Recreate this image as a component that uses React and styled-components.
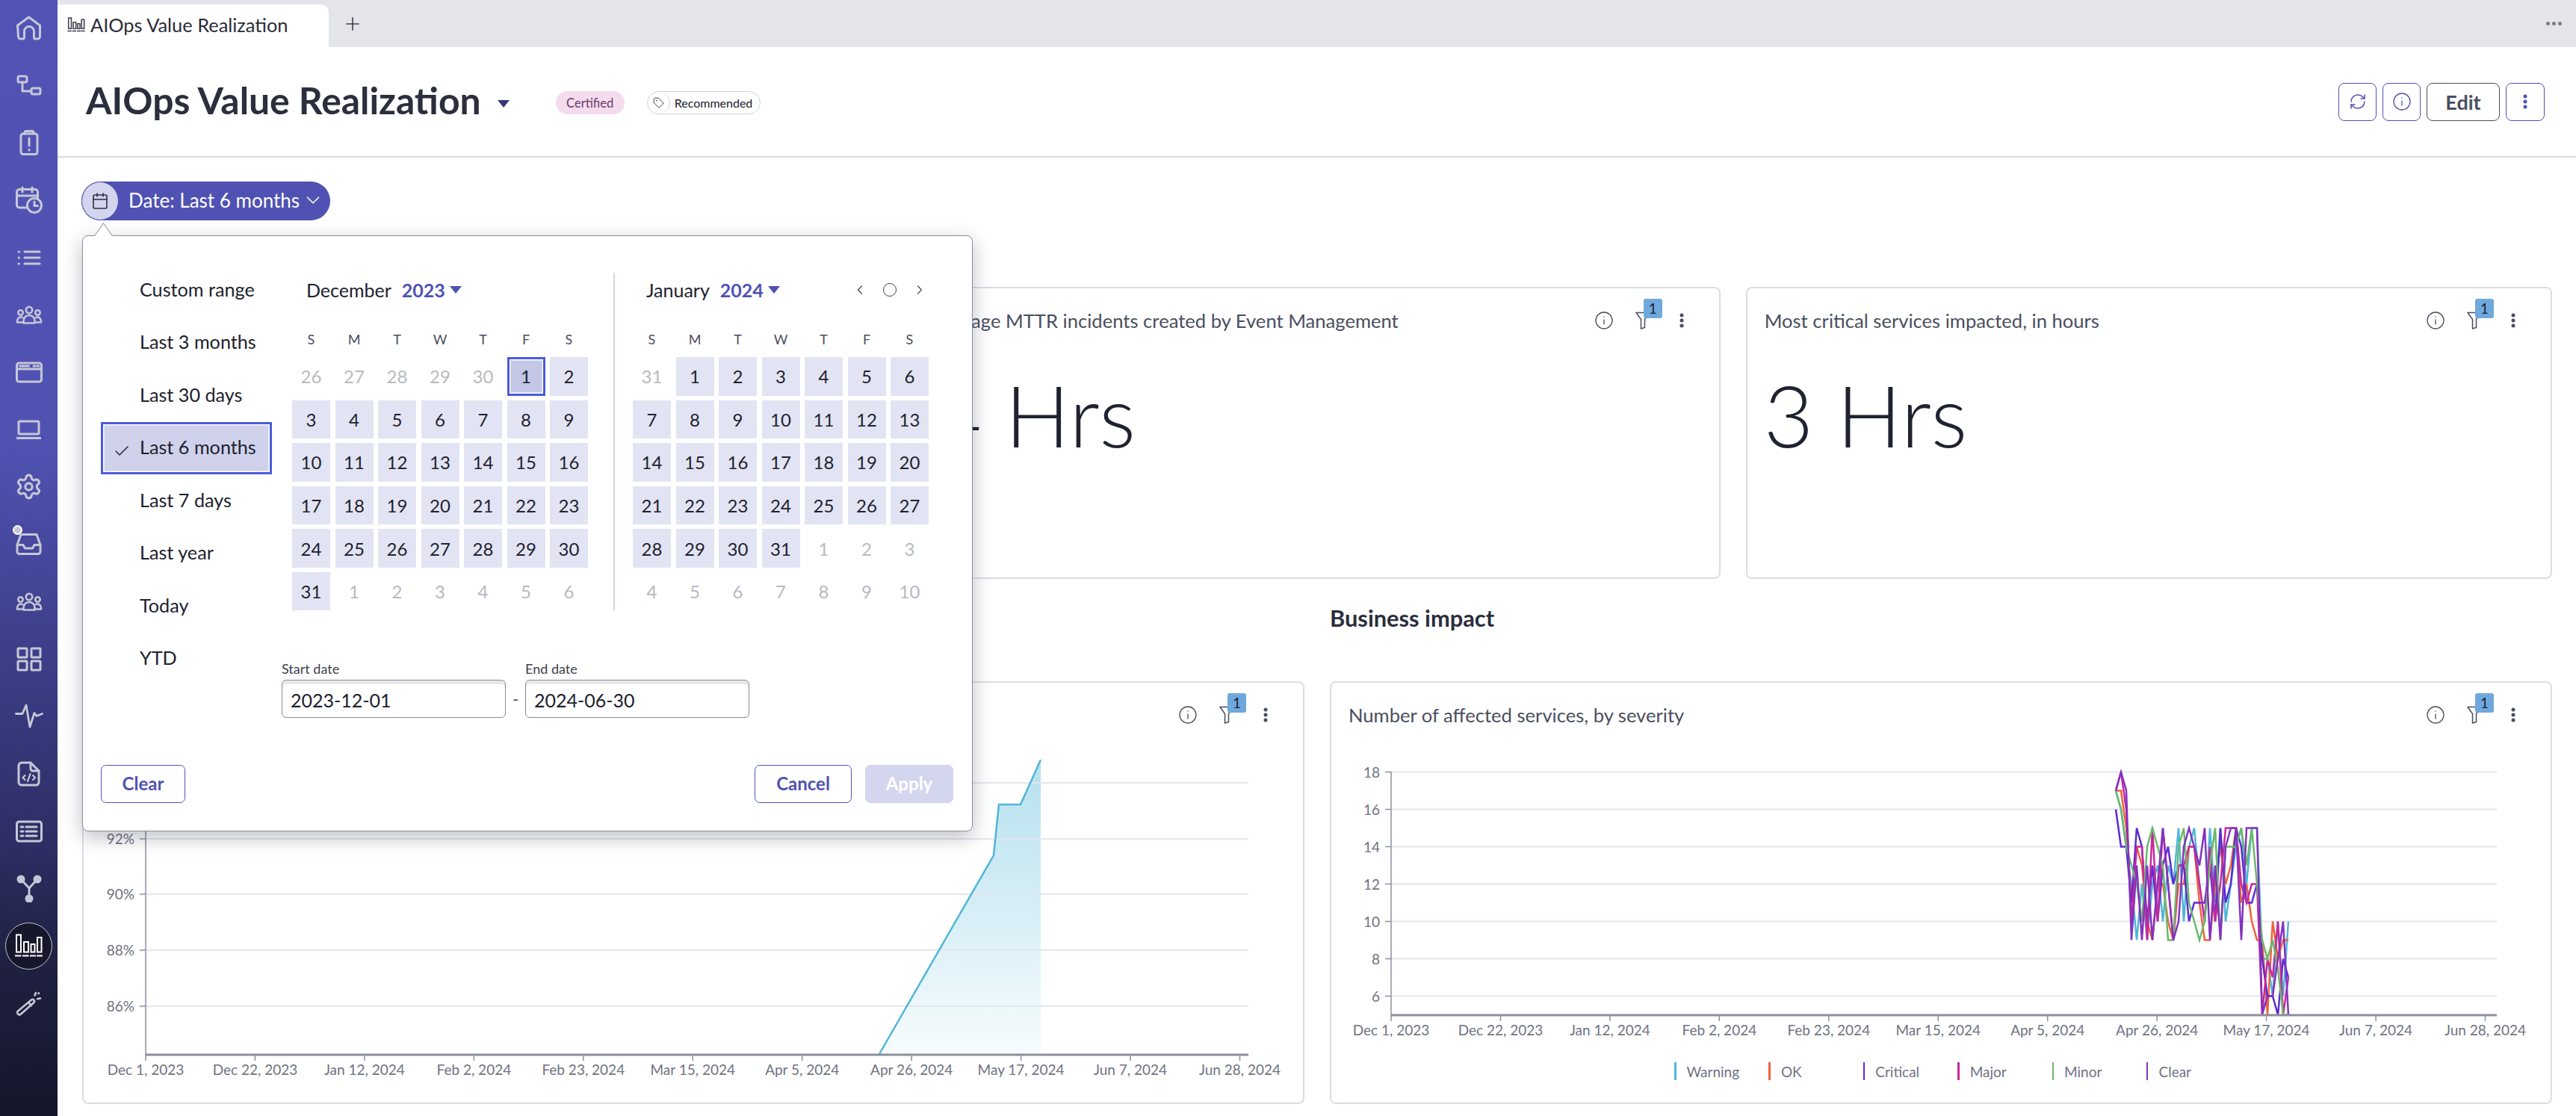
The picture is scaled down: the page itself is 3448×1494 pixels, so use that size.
import React from "react";
import styled, { createGlobalStyle } from "styled-components";
import { Settings, RefreshCw, Check, ChevronLeft, ChevronRight, ChevronDown, Tag, Plus, Calendar } from "lucide-react";

const indigo = "#5052b3";
const ink = "#20222e";
const slate = "#4a4e60";
const iconGrey = "#c6c7d6";

const GlobalStyle = createGlobalStyle`
  html, body {
    margin: 0;
    padding: 0;
    background: #fff;
    font-family: Lato, "Open Sans", sans-serif;
    color: ${ink};
  }
  * { box-sizing: border-box; }
`;

const presets = ["Custom range", "Last 3 months", "Last 30 days", "Last 6 months", "Last 7 days", "Last year", "Today", "YTD"];

const range = (from, to) => {
  const out = [];
  for (let i = from; i <= to; i++) out.push(i);
  return out;
};

const decemberCells = [
  ...range(26, 30).map((d) => ({ d, muted: true })),
  ...range(1, 31).map((d) => ({ d, selected: d === 1 })),
  ...range(1, 6).map((d) => ({ d, muted: true })),
];
const januaryCells = [
  { d: 31, muted: true },
  ...range(1, 31).map((d) => ({ d })),
  ...range(1, 10).map((d) => ({ d, muted: true })),
];

const weekdays = ["S", "M", "T", "W", "T", "F", "S"];

const dateTicks = ["Dec 1, 2023", "Dec 22, 2023", "Jan 12, 2024", "Feb 2, 2024", "Feb 23, 2024", "Mar 15, 2024", "Apr 5, 2024", "Apr 26, 2024", "May 17, 2024", "Jun 7, 2024", "Jun 28, 2024"];

const severity = [
  { name: "Warning", color: "#4fb6d8", values: [17, 16, 14, 12, 9, 12, 9, 12, 13, 10, 13, 12, 15, 10, 14, 15, 12, 10, 15, 11, 15, 10, 12, 14, 15, 12, 15, 15, 8, 8, 6, 10, 6, 10] },
  { name: "OK", color: "#f0623a", values: [17, 17, 15, 11, 14, 13, 10, 9, 12, 12, 10, 9, 12, 12, 14, 14, 11, 9, 9, 12, 14, 12, 13, 15, 11, 12, 10, 9, 9, 5, 10, 8, 9, 9] },
  { name: "Critical", color: "#5a2bd6", values: [16, 14, 14, 11, 15, 14, 10, 13, 10, 13, 14, 12, 13, 13, 10, 11, 11, 11, 13, 10, 15, 11, 12, 15, 14, 11, 11, 12, 8, 6, 6, 5, 8, 7] },
  { name: "Major", color: "#c8299c", values: [17, 18, 16, 10, 14, 14, 9, 15, 10, 15, 12, 9, 13, 13, 14, 14, 12, 10, 14, 10, 12, 15, 15, 15, 12, 11, 12, 12, 5, 8, 7, 10, 5, 7] },
  { name: "Minor", color: "#6cb96c", values: [17, 16, 14, 13, 12, 10, 14, 15, 14, 13, 9, 9, 14, 15, 11, 10, 9, 10, 13, 15, 9, 14, 14, 14, 15, 13, 15, 12, 9, 8, 9, 7.5, 5, 5] },
  { name: "Clear", color: "#8333c0", values: [17, 18, 17, 9, 13, 9, 13, 9, 12, 15, 12, 9, 10, 14, 15, 14, 13, 15, 9, 13, 9, 14, 15, 15, 9, 15, 15, 15, 5, 6, 6, 8, 10, 5] },
];

// sidebar icons, each drawn in its own box so the size follows the reference
const Glyph = ({ w, h, children, color = iconGrey, sw = 3 }) => (
  <svg width={w} height={h} viewBox={`0 0 ${w} ${h}`} fill="none" stroke={color} strokeWidth={sw} strokeLinecap="round" strokeLinejoin="round">
    {children}
  </svg>
);

const BarsIcon = ({ w, h, color, sw }) => (
  <svg width={w} height={h} viewBox="0 0 37 32" fill="none" stroke={color} strokeWidth={sw}>
    <rect x="2" y="1.5" width="6" height="23" />
    <rect x="12" y="11" width="6" height="13.5" />
    <rect x="21.5" y="14" width="5" height="10.5" />
    <rect x="30" y="5" width="5.5" height="19.5" />
    <path d="M0 29.5h8.5M10 29.5h8.5M20 29.5h8M29 29.5h8" />
  </svg>
);

const PeopleIcon = () => (
  <Glyph w={36} h={25} sw={2.6}>
    <circle cx="18" cy="6" r="4.2" />
    <path d="M10.5 23.5v-3a7.5 7.5 0 0 1 15 0v3z" />
    <circle cx="6.5" cy="9.5" r="3.2" />
    <path d="M9 22.5H2v-2a5 5 0 0 1 7-4.5" />
    <circle cx="29.5" cy="9.5" r="3.2" />
    <path d="M27 22.5h7v-2a5 5 0 0 0-7-4.5" />
  </Glyph>
);

function InboxIcon() {
  return (
    <Glyph w={35} h={31}>
      <path d="M7 2.5h21l5 14v9a3 3 0 0 1-3 3H5a3 3 0 0 1-3-3v-9z" />
      <path d="M2 16.500h8l2.500 4.500h10l2.500-4.500h8" />
    </Glyph>
  );
}

const sideIcons = [
  <Glyph key="home" w={35} h={33}>
    <path d="M2.5 13 17.5 2l15 11v15a3 3 0 0 1-3 3h-3a2 2 0 0 1-2-2v-8a6.5 6.5 0 0 0-13 0v8a2 2 0 0 1-2 2h-3a3 3 0 0 1-3-3z" />
  </Glyph>,
  <Glyph key="flow" w={34} h={28}>
    <rect x="2" y="2" width="12" height="8" rx="2" />
    <rect x="20" y="18" width="12" height="8" rx="2" />
    <path d="M8 10v12h12" />
  </Glyph>,
  <Glyph key="clip" w={26} h={34}>
    <rect x="2" y="5" width="22" height="27.5" rx="3" />
    <path d="M7 5V3.500A2 2 0 0 1 9 1.500h8a2 2 0 0 1 2 2V5" />
    <path d="M13 11v10M13 26.500v.5" />
  </Glyph>,
  <Glyph key="cal" w={38} h={37}>
    <path d="M15 29H6a3.500 3.500 0 0 1-3.500-3.500V8A3.500 3.500 0 0 1 6 4.500h21A3.500 3.500 0 0 1 30.500 8v8" />
    <path d="M10 2v6M23 2v6M3 13h27" />
    <circle cx="26" cy="26" r="9.500" />
    <path d="M26 21v5.500h4.500" />
  </Glyph>,
  <Glyph key="list" w={32} h={22}>
    <path d="M10 3h20M10 11h20M10 19h20M2 3h.5M2 11h.5M2 19h.5" />
  </Glyph>,
  <PeopleIcon key="team" />,
  <Glyph key="window" w={36} h={29}>
    <rect x="1.500" y="2" width="33" height="25" rx="3" />
    <path d="M1.500 10h33M5.500 6h12M24 6h2M29 6h2" />
  </Glyph>,
  <Glyph key="laptop" w={33} h={26}>
    <rect x="3" y="2" width="27" height="17" rx="1.500" />
    <path d="M1 24.500h31" />
  </Glyph>,
  <Settings key="gear" size={37} color={iconGrey} strokeWidth={2} />,
  <InboxIcon key="inbox" />,
  <PeopleIcon key="team2" />,
  <Glyph key="grid" w={34} h={33}>
    <rect x="2" y="2" width="12" height="12" rx="1" />
    <rect x="20" y="2" width="12" height="12" rx="1" />
    <rect x="2" y="19" width="12" height="12" rx="1" />
    <rect x="20" y="19" width="12" height="12" rx="1" />
  </Glyph>,
  <Glyph key="pulse" w={38} h={34} sw={2.8}>
    <path d="M1.500 13.500h8.500l5-11.500 5 29 6-18.500 3 4 7.500-3" />
  </Glyph>,
  <Glyph key="code" w={31} h={34}>
    <path d="M18 2H6a4 4 0 0 0-4 4v22a4 4 0 0 0 4 4h19a4 4 0 0 0 4-4V13z" />
    <path d="M18 2v8a3 3 0 0 0 3 3h8" />
    <path d="M10.500 19l-3 3 3 3M21 19l3 3-3 3M17.500 17l-3.500 10" strokeWidth="2.200" />
  </Glyph>,
  <Glyph key="form" w={36} h={30}>
    <rect x="1.500" y="2" width="33" height="26" rx="3" />
    <path d="M7 9h3M14 9h14M7 15h3M14 15h14M7 21h3M14 21h14" />
  </Glyph>,
  <Glyph key="net" w={34} h={37}>
    <path d="M6 6l11 12 11-12M17 18v13" />
    <circle cx="6" cy="6" r="4" fill={iconGrey} />
    <circle cx="28" cy="6" r="4" fill={iconGrey} />
    <circle cx="17" cy="32" r="4" fill={iconGrey} />
  </Glyph>,
  null,
  <Glyph key="wand" w={36} h={34} sw={2.600}>
    <path d="M3 27.500 21 12.500a2.500 2.500 0 0 1 3.500 3.500L7 31.500a2.500 2.500 0 0 1-4-4zM17 16l4 4" />
    <path d="M27 3l-1.500 3.500M33 10.500l-4 .8M31 3.500l-.5.500" />
  </Glyph>,
];

const Kebab = ({ color = slate }) => (
  <svg width="6" height="20" viewBox="0 0 6 20" fill={color}>
    <circle cx="3" cy="3" r="2.500" />
    <circle cx="3" cy="10" r="2.500" />
    <circle cx="3" cy="17" r="2.500" />
  </svg>
);

const InfoMark = ({ color = slate, size = 24 }) => (
  <svg width={size} height={size} viewBox="0 0 24 24" fill="none" stroke={color} strokeWidth="1.300">
    <circle cx="12" cy="12" r="11" />
    <path d="M12 10.500v7M12 6.500v1.300" />
  </svg>
);

const Funnel = () => (
  <svg width="20" height="24" viewBox="0 0 20 24" fill="none" stroke={slate} strokeWidth="1.500" strokeLinejoin="round">
    <path d="M1 1.500h18l-6.500 9v11l-5 1.500V10.500z" />
  </svg>
);

const Caret = styled.span`
  display: inline-block;
  width: 0;
  height: 0;
  border-left: ${(p) => p.$size}px solid transparent;
  border-right: ${(p) => p.$size}px solid transparent;
  border-top: ${(p) => p.$size * 1.25}px solid ${(p) => p.$color};
`;

const Page = styled.div`
  display: flex;
  width: 3448px;
  height: 1494px;
  overflow: hidden;
`;

const Sidebar = styled.nav`
  flex: 0 0 77px;
  height: 100%;
  background: linear-gradient(180deg, #5153b5 0%, #5052b2 40%, #3a3c84 61%, #2f3068 74%, #1f2040 87%, #15162a 100%);
`;

const SideList = styled.div`
  display: flex;
  flex-direction: column;
  margin-top: -1px;
`;

const SideSlot = styled.div`
  position: relative;
  height: 76.8px;
  display: flex;
  align-items: center;
  justify-content: center;
`;

const ActiveIcon = styled.div`
  width: 63px;
  height: 63px;
  border-radius: 50%;
  background: #16172a;
  border: 1.5px solid #c5c5d0;
  display: flex;
  align-items: center;
  justify-content: center;
`;

const InboxDot = styled.span`
  position: absolute;
  left: 17px;
  top: 13px;
  width: 13px;
  height: 13px;
  border-radius: 50%;
  background: #c6c7d6;
  border: 2px solid #fff;
`;

const Main = styled.main`
  flex: 1;
  min-width: 0;
  display: flex;
  flex-direction: column;
`;

const TabBar = styled.div`
  height: 63px;
  flex: none;
  background: #e4e5ea;
  padding-top: 6px;
  display: flex;
  align-items: stretch;
`;

const Tab = styled.div`
  width: 363px;
  background: #fff;
  border-top-right-radius: 10px;
  display: flex;
  align-items: center;
  gap: 7px;
  padding: 0 0 4px 13px;
  font-size: 25.4px;
  color: #2a2c38;
`;

const AddTab = styled.div`
  margin-left: 18px;
  margin-bottom: 6px;
  display: flex;
  align-items: center;
  color: #3d3f4d;
`;

const TabMore = styled.div`
  margin-left: auto;
  margin-right: 19px;
  margin-bottom: 6px;
  align-self: center;
  display: flex;
  gap: 3px;
`;

const TabDot = styled.span`
  width: 5px;
  height: 5px;
  border-radius: 50%;
  background: #7a7c88;
`;

const Header = styled.header`
  height: 148px;
  flex: none;
  border-bottom: 2px solid #d8d9e2;
  display: flex;
  align-items: center;
  padding: 0 42px 0 38px;
`;

const Title = styled.h1`
  margin: 0 0 4px;
  font-size: 49.8px;
  font-weight: 700;
  color: #2b2e3d;
`;

const TitleCaret = styled.span`
  display: flex;
  margin: 6px 0 0 22px;
`;

const Certified = styled.span`
  margin: 3px 0 0 62px;
  height: 31px;
  padding: 0 14.500px;
  border-radius: 16px;
  background: #f4dcee;
  color: #6b3a6a;
  font-size: 16.5px;
  display: flex;
  align-items: center;
`;

const Recommended = styled.span`
  margin: 3px 0 0 30px;
  height: 31px;
  border-radius: 16px;
  border: 1.5px solid #cfd0d8;
  font-size: 16px;
  color: #20222e;
  display: flex;
  align-items: center;
  padding-right: 10px;
`;

const TagBox = styled.span`
  width: 30px;
  height: 29px;
  border-radius: 50%;
  border-right: 1.5px solid #cfd0d8;
  display: flex;
  align-items: center;
  justify-content: center;
  margin-right: 6px;
`;

const HeaderActions = styled.div`
  margin-left: auto;
  display: flex;
  gap: 8px;
`;

const ActionButton = styled.button`
  width: ${(p) => p.$width || 51}px;
  height: 51px;
  background: #fff;
  border: 1.5px solid ${(p) => p.$color || indigo};
  border-radius: 8px;
  display: flex;
  align-items: center;
  justify-content: center;
  padding: 0;
  color: ${slate};
  font-family: inherit;
  font-size: 27px;
  font-weight: 700;
`;

const Content = styled.div`
  flex: 1;
  padding: 0 32px 0 33px;
`;

const FilterRow = styled.div`
  position: relative;
  height: 173px;
  padding-top: 32px;
`;

const DatePill = styled.div`
  margin-left: -1px;
  width: 333px;
  height: 52px;
  padding-bottom: 2px;
  border-radius: 26px;
  background: ${indigo};
  display: flex;
  align-items: center;
  color: #fff;
  font-size: 26px;
`;

const PillIcon = styled.span`
  width: 50px;
  height: 52px;
  margin-bottom: -2px;
  border-radius: 50%;
  background: #d3d5ee;
  border: 1px solid ${indigo};
  display: flex;
  align-items: center;
  justify-content: center;
  margin-right: 13px;
`;

const PillChevron = styled.span`
  display: flex;
  margin-left: 3px;
`;

const Popup = styled.div`
  position: absolute;
  z-index: 10;
  left: 0;
  top: 104px;
  width: 1192px;
  height: 798px;
  background: #fff;
  border: 1.5px solid #8c8d9b;
  border-radius: 8px;
  box-shadow: 0 8px 26px rgba(40, 42, 60, 0.3);
  padding: 37px 25px 37px 24px;
  display: flex;
  flex-direction: column;

  &::before {
    content: "";
    position: absolute;
    left: 17px;
    top: -11px;
    width: 20px;
    height: 20px;
    background: #fff;
    border-left: 1.5px solid #8c8d9b;
    border-top: 1.5px solid #8c8d9b;
    transform: rotate(45deg) skew(10deg, 10deg);
  }
`;

const PopupBody = styled.div`
  display: flex;
  gap: 14px;
`;

const PresetList = styled.div`
  flex: 0 0 229px;
  display: flex;
  flex-direction: column;
`;

const Preset = styled.div`
  height: 70.5px;
  position: relative;
  display: flex;
  align-items: center;
  padding: 0 0 3px 52px;
  font-size: 25.2px;
  color: ${ink};
  ${(p) =>
    p.$active &&
    `
    background: #d0d2ec;
    border: 3px solid #4b5bdc;
    box-shadow: inset 0 0 0 1.5px #fff;
    padding-left: 49px;
  `}
`;

const PresetCheck = styled.span`
  position: absolute;
  left: 13px;
  top: 24px;
  display: flex;
`;

const CalendarColumn = styled.div`
  display: flex;
  flex-direction: column;
  padding-top: 12px;
`;

const Calendars = styled.div`
  display: flex;
  padding-left: 13px;
`;

const Month = styled.div`
  width: 396px;
`;

const MonthDivider = styled.div`
  width: 1.5px;
  background: #d5d6e0;
  margin: 0 24.500px 0 34px;
`;

const MonthHead = styled.div`
  height: 46px;
  display: flex;
  align-items: center;
  font-size: 25px;
  padding-left: ${(p) => p.$indent}px;
`;

const Year = styled.span`
  margin-left: 14px;
  margin-right: 6px;
  font-weight: 700;
  color: ${indigo};
`;

const MonthNav = styled.div`
  margin-left: auto;
  margin-right: 2px;
  display: flex;
  align-items: center;
  gap: 21px;
  color: ${slate};
`;

const TodayRing = styled.span`
  width: 18px;
  height: 18px;
  border-radius: 50%;
  border: 1.5px solid #3d3f4d;
`;

const WeekRow = styled.div`
  display: grid;
  grid-template-columns: repeat(7, 51px);
  column-gap: 6.500px;
  height: 50px;
  margin-top: 17px;
  padding-top: 2px;
  align-items: center;
  text-align: center;
  font-size: 18px;
  color: ${slate};
`;

const DayGrid = styled.div`
  display: grid;
  grid-template-columns: repeat(7, 51px);
  grid-auto-rows: 51.500px;
  column-gap: 6.500px;
  row-gap: 6.100px;
`;

const Day = styled.div`
  display: flex;
  align-items: center;
  justify-content: center;
  font-size: 24px;
  color: ${(p) => (p.$muted ? "#b8b9c0" : ink)};
  background: ${(p) => (p.$muted ? "transparent" : p.$selected ? "#c4c6e6" : "#e2e4f3")};
  ${(p) => p.$selected && "border: 3px solid #4b5bdc; box-shadow: inset 0 0 0 1.5px #fff;"}
`;

const DateRow = styled.div`
  display: flex;
  align-items: flex-end;
  margin: 68px 0 0 -1px;
`;

const DateField = styled.label`
  display: flex;
  flex-direction: column;
  width: 300px;
`;

const DateLabel = styled.span`
  font-size: 18px;
  line-height: 20px;
  margin-bottom: 5px;
  color: #3d3f4d;
`;

const DateBox = styled.div`
  height: 51px;
  border: 1.5px solid #8a8b98;
  border-radius: 6px;
  box-shadow: inset 0 5px 0 #e8e9eb;
  padding: 3px 0 0 11px;
  display: flex;
  align-items: center;
  font-size: 25px;
  color: ${ink};
`;

const DateDash = styled.span`
  width: 26px;
  height: 51px;
  display: flex;
  align-items: center;
  justify-content: center;
  font-size: 22px;
  color: #3d3f4d;
`;

const PopupFooter = styled.div`
  margin-top: auto;
  display: flex;
  align-items: center;
  gap: 18px;
`;

const FooterButton = styled.button`
  width: ${(p) => p.$width}px;
  height: 51px;
  border-radius: 7px;
  font-family: inherit;
  font-size: 24px;
  font-weight: 700;
  padding: 0 0 3px;
  color: ${(p) => (p.$disabled ? "#fff" : indigo)};
  background: ${(p) => (p.$disabled ? "#d4d5ee" : "#fff")};
  border: 1.5px solid ${(p) => (p.$disabled ? "#d4d5ee" : indigo)};
  ${(p) => p.$push && "margin-right: auto;"}
`;

const CardRow = styled.div`
  display: grid;
  grid-template-columns: repeat(3, 1fr);
  gap: 34px;
  height: 391px;
`;

const Card = styled.section`
  background: #fff;
  border: 2px solid #dcdde5;
  border-radius: 8px;
`;

const ChartCard = styled(Card)`
  height: 566px;
`;

const CardHead = styled.div`
  height: 90px;
  margin-top: -2px;
  display: flex;
  align-items: center;
  padding: 0 24px 0 23px;
`;

const CardTitle = styled.h3`
  margin: 0;
  font-size: 25.6px;
  font-weight: 400;
  color: ${slate};
`;

const CardIcons = styled.div`
  margin-left: auto;
  display: flex;
`;

const CardIcon = styled.span`
  position: relative;
  width: 52px;
  display: flex;
  align-items: center;
  justify-content: center;
`;

const FilterBadge = styled.span`
  position: absolute;
  left: 27px;
  top: -17px;
  width: 25px;
  height: 26px;
  border-radius: 3px;
  background: #6fa8dc;
  color: ${ink};
  font-size: 19px;
  line-height: 26px;
  text-align: center;
`;

const BigValue = styled.div`
  margin: 23px 0 0 22px;
  font-size: 115px;
  line-height: 114px;
  font-weight: 300;
  color: #1f2230;
`;

const SectionGrid = styled.div`
  display: grid;
  grid-template-columns: repeat(2, 1fr);
  gap: 34px;
`;

const SectionHeading = styled.h2`
  margin: 0;
  height: 137px;
  padding-top: 35px;
  font-size: 30.8px;
  line-height: 36px;
  font-weight: 700;
  color: #2b2e3d;
`;

const ChartSvg = styled.svg`
  display: block;
  width: 100%;
  font-family: Lato, sans-serif;
  font-size: 19px;
`;

const Legend = styled.div`
  display: flex;
  justify-content: flex-start;
  padding-left: 459px;
  margin-top: 27px;
`;

const LegendItem = styled.div`
  width: 126.400px;
  height: 24px;
  display: flex;
  align-items: center;
  font-size: 19px;
  color: #6f7282;

  &::before {
    content: "";
    width: 2.500px;
    height: 24px;
    margin-right: 14px;
    background: ${(p) => p.$color};
  }
`;

const tickColor = "#8d8f9e";
const gridColor = "#e4e5ee";
const labelColor = "#6f7282";

const AxisTicks = ({ x0, y }) =>
  dateTicks.map((label, i) => {
    const x = x0 + i * 146.45;
    return (
      <g key={label}>
        <line x1={x} x2={x} y1={y} y2={y + 8} stroke={tickColor} strokeWidth="1.500" />
        <text x={x} y={y + 27} textAnchor="middle" fill={labelColor}>{label}</text>
      </g>
    );
  });

const YGrid = ({ x0, x1, rows }) =>
  rows.map((row) => (
    <g key={row.label}>
      <line x1={x0} x2={x1} y1={row.y} y2={row.y} stroke={gridColor} strokeWidth="2" />
      <line x1={x0 - 8} x2={x0} y1={row.y} y2={row.y} stroke={tickColor} strokeWidth="1.500" />
      <text x={x0 - 15} y={row.y + 7} textAnchor="end" fill={labelColor}>{row.label}</text>
    </g>
  ));

const AvailabilityChart = () => {
  const rows = [
    { label: "94%", y: 1049 },
    { label: "92%", y: 1124 },
    { label: "90%", y: 1198 },
    { label: "88%", y: 1273 },
    { label: "86%", y: 1348 },
  ];
  const line = "1177,1412 1330,1146 1337,1078 1366,1078 1393,1018";
  return (
    <ChartSvg height="448" viewBox="112 1003 1632 448">
      <defs>
        <linearGradient id="areaFill" x1="0" y1="0" x2="0" y2="1">
          <stop offset="0" stopColor="#4fb6d8" stopOpacity="0.42" />
          <stop offset="1" stopColor="#4fb6d8" stopOpacity="0.05" />
        </linearGradient>
      </defs>
      <polygon points={`${line} 1393,1413 1177,1413`} fill="url(#areaFill)" />
      <YGrid x0={195} x1={1671} rows={rows} />
      <polyline points={line} fill="none" stroke="#4fb6d8" strokeWidth="2.500" />
      <line x1="195" x2="195" y1="1020" y2="1413" stroke={tickColor} strokeWidth="1.500" />
      <line x1="195" x2="1671" y1="1413" y2="1413" stroke={tickColor} strokeWidth="3" />
      <AxisTicks x0={195} y={1413} />
    </ChartSvg>
  );
};

const SeverityChart = () => {
  const yOf = (v) => 1034.5 + (18 - v) * 25;
  const rows = [18, 16, 14, 12, 10, 8, 6].map((v) => ({ label: String(v), y: yOf(v) }));
  return (
    <ChartSvg height="393" viewBox="1782 1003 1632 393">
      <defs>
        <clipPath id="plotClip">
          <rect x="1862" y="1020" width="1480" height="340" />
        </clipPath>
      </defs>
      <YGrid x0={1862} x1={3342} rows={rows} />
      <g clipPath="url(#plotClip)">
        {severity.map((s) => (
          <polyline
            key={s.name}
            points={s.values.map((v, i) => `${2832 + i * 7},${yOf(v)}`).join(" ")}
            fill="none"
            stroke={s.color}
            strokeWidth="2.500"
          />
        ))}
      </g>
      <line x1="1862" x2="1862" y1="1034" y2="1360" stroke={tickColor} strokeWidth="1.500" />
      <line x1="1862" x2="3342" y1="1360" y2="1360" stroke={tickColor} strokeWidth="3" />
      <AxisTicks x0={1862} y={1360} />
    </ChartSvg>
  );
};

const CardTools = () => (
  <CardIcons>
    <CardIcon><InfoMark /></CardIcon>
    <CardIcon>
      <Funnel />
      <FilterBadge>1</FilterBadge>
    </CardIcon>
    <CardIcon><Kebab /></CardIcon>
  </CardIcons>
);

const MonthPanel = ({ month, year, cells, indent, nav }) => (
  <Month>
    <MonthHead $indent={indent}>
      {month}
      <Year>{year}</Year>
      <Caret $size={8} $color={indigo} />
      {nav && (
        <MonthNav>
          <ChevronLeft size={20} strokeWidth={1.5} />
          <TodayRing />
          <ChevronRight size={20} strokeWidth={1.5} />
        </MonthNav>
      )}
    </MonthHead>
    <WeekRow>
      {weekdays.map((d, i) => <span key={i}>{d}</span>)}
    </WeekRow>
    <DayGrid>
      {cells.map((c, i) => (
        <Day key={i} $muted={c.muted} $selected={c.selected}>{c.d}</Day>
      ))}
    </DayGrid>
  </Month>
);

export default function App() {
  return (
    <Page>
      <GlobalStyle />
      <Sidebar>
        <SideList>
          {sideIcons.map((icon, i) => (
            <SideSlot key={i}>
              {icon || (
                <ActiveIcon>
                  <BarsIcon w={37} h={32} color="#fff" sw={2} />
                </ActiveIcon>
              )}
              {i === 9 && <InboxDot />}
            </SideSlot>
          ))}
        </SideList>
      </Sidebar>

      <Main>
        <TabBar>
          <Tab>
            <BarsIcon w={24} h={20} color="#3a3c48" sw={2.4} />
            AIOps Value Realization
          </Tab>
          <AddTab><Plus size={28} strokeWidth={1.4} /></AddTab>
          <TabMore>
            <TabDot /><TabDot /><TabDot />
          </TabMore>
        </TabBar>

        <Header>
          <Title>AIOps Value Realization</Title>
          <TitleCaret><Caret $size={8} $color="#34377f" /></TitleCaret>
          <Certified>Certified</Certified>
          <Recommended>
            <TagBox><Tag size={15} strokeWidth={1.6} color="#3d3f4d" /></TagBox>
            Recommended
          </Recommended>
          <HeaderActions>
            <ActionButton aria-label="Refresh"><RefreshCw size={24} strokeWidth={1.5} color={indigo} /></ActionButton>
            <ActionButton aria-label="Info"><InfoMark color={indigo} /></ActionButton>
            <ActionButton $width={98} $color="#4a4d5c">Edit</ActionButton>
            <ActionButton $width={52} aria-label="More"><Kebab color={indigo} /></ActionButton>
          </HeaderActions>
        </Header>

        <Content>
          <FilterRow>
            <DatePill>
              <PillIcon><Calendar size={24} strokeWidth={1.6} color="#2b2e3d" /></PillIcon>
              Date: Last 6 months
              <PillChevron><ChevronDown size={30} strokeWidth={1.3} /></PillChevron>
            </DatePill>

            <Popup>
              <PopupBody>
                <PresetList>
                  {presets.map((p) => (
                    <Preset key={p} $active={p === "Last 6 months"}>
                      {p === "Last 6 months" && <PresetCheck><Check size={24} strokeWidth={1.6} color="#2b2e3d" /></PresetCheck>}
                      {p}
                    </Preset>
                  ))}
                </PresetList>
                <CalendarColumn>
                  <Calendars>
                    <MonthPanel month="December" year="2023" cells={decemberCells} indent={19} />
                    <MonthDivider />
                    <MonthPanel month="January" year="2024" cells={januaryCells} indent={18} nav />
                  </Calendars>
                  <DateRow>
                    <DateField>
                      <DateLabel>Start date</DateLabel>
                      <DateBox>2023-12-01</DateBox>
                    </DateField>
                    <DateDash>-</DateDash>
                    <DateField>
                      <DateLabel>End date</DateLabel>
                      <DateBox>2024-06-30</DateBox>
                    </DateField>
                  </DateRow>
                </CalendarColumn>
              </PopupBody>
              <PopupFooter>
                <FooterButton $width={113} $push>Clear</FooterButton>
                <FooterButton $width={130}>Cancel</FooterButton>
                <FooterButton $width={118} $disabled>Apply</FooterButton>
              </PopupFooter>
            </Popup>
          </FilterRow>

          <CardRow>
            <Card />
            <Card>
              <CardHead>
                <CardTitle>Average MTTR incidents created by Event Management</CardTitle>
                <CardTools />
              </CardHead>
              <BigValue>4 Hrs</BigValue>
            </Card>
            <Card>
              <CardHead>
                <CardTitle>Most critical services impacted, in hours</CardTitle>
                <CardTools />
              </CardHead>
              <BigValue>3 Hrs</BigValue>
            </Card>
          </CardRow>

          <SectionGrid>
            <div>
              <SectionHeading />
              <ChartCard>
                <CardHead>
                  <CardTitle />
                  <CardTools />
                </CardHead>
                <AvailabilityChart />
              </ChartCard>
            </div>
            <div>
              <SectionHeading>Business impact</SectionHeading>
              <ChartCard>
                <CardHead>
                  <CardTitle>Number of affected services, by severity</CardTitle>
                  <CardTools />
                </CardHead>
                <SeverityChart />
                <Legend>
                  {severity.map((s) => (
                    <LegendItem key={s.name} $color={s.color}>{s.name}</LegendItem>
                  ))}
                </Legend>
              </ChartCard>
            </div>
          </SectionGrid>
        </Content>
      </Main>
    </Page>
  );
}
